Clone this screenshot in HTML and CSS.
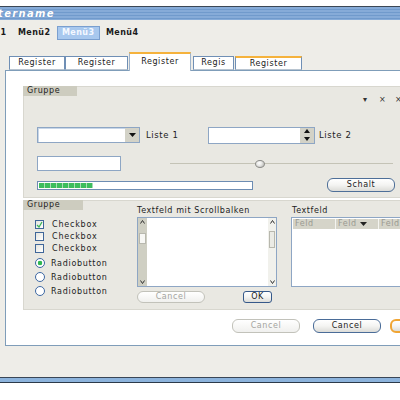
FILE: index.html
```html
<!DOCTYPE html>
<html>
<head>
<meta charset="utf-8">
<link rel="stylesheet" href="styles.css">
</head>
<body>
<div class="window">
  <div class="titlebar"><span class="title">Fenstername</span></div>
  <div class="menubar">
    <span class="menu">Menü1</span><span class="menu">Menü2</span><span class="menu active">Menü3</span><span class="menu">Menü4</span>
  </div>
  <div class="tabs">
    <div class="tab t1">Register</div>
    <div class="tab t2">Register</div>
    <div class="tab t3 selected">Register</div>
    <div class="tab t4">Regis</div>
    <div class="tab t5 hover">Register</div>
  </div>
  <div class="panel">
    <div class="group g1">
      <div class="legend">Gruppe</div>
      <div class="win-icons"><span>▾</span><span>×</span><span>×</span></div>
      <div class="row r1">
        <div class="combo">
          <div class="drop"><svg width="7" height="4" viewBox="0 0 7 4"><polygon points="0,0 7,0 3.5,4" fill="#111"/></svg></div>
        </div>
        <span class="lbl l1">Liste 1</span>
        <div class="spinner">
          <div class="spin">
            <span><svg width="6" height="4" viewBox="0 0 6 4"><polygon points="0,4 6,4 3,0" fill="#111"/></svg></span>
            <span><svg width="6" height="4" viewBox="0 0 6 4"><polygon points="0,0 6,0 3,4" fill="#111"/></svg></span>
          </div>
        </div>
        <span class="lbl l2">Liste 2</span>
      </div>
      <div class="row r2">
        <div class="textfield"></div>
        <div class="slider"><div class="knob"></div></div>
      </div>
      <div class="row r3">
        <div class="progress"><div class="bar"></div></div>
        <div class="btn schalt">Schalt</div>
      </div>
    </div>

    <div class="group g2">
      <div class="col c1">
        <div class="legend wide">Gruppe</div>
        <div class="checks">
          <div class="opt chk"><span class="cb"><svg width="7" height="7" viewBox="0 0 7 7"><polyline points="1,4 3,6 6,1" fill="none" stroke="#3cb45a" stroke-width="1.3"/></svg></span>Checkbox</div>
          <div class="opt chk"><span class="cb"></span>Checkbox</div>
          <div class="opt chk"><span class="cb"></span>Checkbox</div>
        </div>
        <div class="radios">
          <div class="opt rad"><span class="rb on"></span>Radiobutton</div>
          <div class="opt rad"><span class="rb"></span>Radiobutton</div>
          <div class="opt rad"><span class="rb"></span>Radiobutton</div>
        </div>
      </div>
      <div class="col c2">
        <div class="caption">Textfeld mit Scrollbalken</div>
        <div class="textarea">
          <div class="sb left">
            <span class="arr"><svg width="5" height="4" viewBox="0 0 5 4"><polyline points="0.5,3.5 2.5,0.5 4.5,3.5" fill="none" stroke="#333" stroke-width="1"/></svg></span>
            <span class="thumb"></span>
            <span class="arr bottom"><svg width="5" height="4" viewBox="0 0 5 4"><polyline points="0.5,0.5 2.5,3.5 4.5,0.5" fill="none" stroke="#333" stroke-width="1"/></svg></span>
          </div>
          <div class="sb right">
            <span class="arr"><svg width="5" height="4" viewBox="0 0 5 4"><polyline points="0.5,3.5 2.5,0.5 4.5,3.5" fill="none" stroke="#333" stroke-width="1"/></svg></span>
            <span class="thumb"></span>
            <span class="arr bottom"><svg width="5" height="4" viewBox="0 0 5 4"><polyline points="0.5,0.5 2.5,3.5 4.5,0.5" fill="none" stroke="#333" stroke-width="1"/></svg></span>
          </div>
        </div>
        <div class="btnrow">
          <div class="btn disabled small">Cancel</div>
          <div class="btn ok">OK</div>
        </div>
      </div>
      <div class="col c3">
        <div class="caption">Textfeld</div>
        <div class="table">
          <div class="thead">
            <span class="th">Feld</span>
            <span class="th">Feld <svg width="7" height="4" viewBox="0 0 7 4"><polygon points="0,0 7,0 3.5,4" fill="#222"/></svg></span>
            <span class="th">Feld</span>
          </div>
        </div>
      </div>
    </div>

    <div class="actions">
      <div class="btn disabled big">Cancel</div>
      <div class="btn big cancel">Cancel</div>
      <div class="btn big default">OK</div>
    </div>
  </div>
  <div class="statusgap"></div>
  <div class="bottombar"></div>
</div>
</body>
</html>
```

FILE: styles.css
```css
* { box-sizing: border-box; }
html, body { margin: 0; padding: 0; }
body {
  width: 400px;
  height: 400px;
  overflow: hidden;
  background: #ffffff;
  font-family: "DejaVu Sans", "Liberation Sans", sans-serif;
  font-size: 8px;
  letter-spacing: 0.6px;
  color: #222;
}
.window {
  margin-top: 6px;
  width: 440px;
  background: #eeede8;
}
.titlebar {
  height: 14px;
  border-top: 1px solid #3b4756;
  background: repeating-linear-gradient(to bottom, #86abd8 0, #86abd8 2px, #709acc 2px, #709acc 3px);
  overflow: hidden;
  white-space: nowrap;
}
.title {
  display: block;
  margin-left: -33px;
  font: italic bold 10px/13px "DejaVu Sans", sans-serif;
  letter-spacing: 1.3px;
  color: #fff;
  text-shadow: 0 0 1px #5f86b8;
}
.menubar {
  display: flex;
  height: 32px;
  padding-top: 6px;
  margin-left: -31px;
  white-space: nowrap;
}
.menu {
  width: 44px;
  height: 14px;
  padding-left: 5px;
  line-height: 14px;
  font-weight: bold;
  letter-spacing: 0.4px;
  color: #1a1a1a;
  flex: none;
}
.menu.active {
  width: 43px;
  margin-right: 1px;
  padding-left: 4px;
  line-height: 12px;
  background: #a8c8ee;
  border: 1px solid #7a9fcf;
  color: #f4f8ff;
}
.tabs {
  display: flex;
  align-items: flex-end;
  height: 18px;
  padding-left: 9px;
}
.tab {
  flex: none;
  height: 14px;
  line-height: 12px;
  text-align: center;
  background: #fff;
  border: 1px solid #6f8fb5;
  border-bottom: 1px solid #b8c4d0;
  color: #222;
}
.t1 { width: 56px; }
.t2 { width: 63px; margin-right: 1px; }
.t3 { width: 62px; margin-right: 2px; }
.t4 { width: 41px; margin-right: 1px; }
.t5 { width: 67px; }
.tab.selected {
  position: relative;
  z-index: 1;
  height: 19px;
  margin-bottom: -1px;
  line-height: 15px;
  border: 1px solid #9fb4cc;
  border-top: 2px solid #f5b23c;
  border-bottom: none;
}
.tab.hover {
  border-top: 2px solid #f5b23c;
  line-height: 11px;
}
.panel {
  margin-left: 5px;
  width: 430px;
  height: 276px;
  background: #fff;
  border: 1px solid #7f9db9;
  padding: 15px 0 0 17px;
}
.group {
  width: 400px;
  background: #e9e8e2;
  border: 1px solid #d8d7cf;
}
.g1 { height: 112px; }
.g2 { height: 110px; margin-top: 2px; display: flex; }
.legend {
  width: 54px;
  height: 10px;
  margin: -1px 0 0 -1px;
  padding-left: 4px;
  line-height: 10px;
  background: #cdccbf;
  color: #222;
}
.legend.wide { width: 60px; }
.win-icons {
  display: flex;
  height: 8px;
  line-height: 8px;
  padding-left: 339px;
  color: #333;
}
.win-icons span { width: 16px; flex: none; }
.row {
  display: flex;
  align-items: center;
  padding-left: 13px;
}
.r1 { margin-top: 23px; height: 16px; }
.combo {
  width: 103px;
  height: 16px;
  background: #fff;
  border: 1px solid #8ea6c4;
  box-shadow: inset 1px 1px 0 #c8d6e8;
  display: flex;
  justify-content: flex-end;
  flex: none;
}
.drop {
  width: 14px;
  height: 100%;
  background: #d3d2c7;
  display: flex;
  align-items: center;
  justify-content: center;
}
.drop svg { display: block; }
.lbl { flex: none; font-size: 8.5px; }
.l1 { width: 68px; padding-left: 6px; }
.spinner {
  width: 107px;
  height: 17px;
  background: #fff;
  border: 1px solid #8ea6c4;
  display: flex;
  justify-content: flex-end;
  flex: none;
}
.spin {
  width: 14px;
  height: 100%;
  background: #d3d2c7;
  display: flex;
  flex-direction: column;
}
.spin span {
  flex: 1;
  display: flex;
  align-items: center;
  justify-content: center;
}
.spin svg { display: block; }
.l2 { padding-left: 4px; }
.r2 { margin-top: 13px; height: 15px; }
.textfield {
  width: 84px;
  height: 15px;
  background: #fff;
  border: 1px solid #8ea6c4;
  flex: none;
}
.slider {
  margin-left: 49px;
  width: 223px;
  height: 9px;
  flex: none;
  display: flex;
  align-items: center;
  background: linear-gradient(to bottom, transparent 4px, #c4c3b6 4px, #c4c3b6 5px, transparent 5px);
}
.knob {
  margin-left: 85px;
  width: 10px;
  height: 8px;
  border-radius: 50%;
  border: 1px solid #8c8c88;
  background: radial-gradient(circle at 40% 35%, #ffffff 0, #e8e8e6 40%, #a8a8a4 100%);
}
.r3 { margin-top: 7px; height: 14px; }
.progress {
  width: 216px;
  height: 9px;
  flex: none;
  background: #fff;
  border: 1px solid #6d8cb2;
  padding: 1px;
}
.bar {
  width: 54px;
  height: 100%;
  background: repeating-linear-gradient(to right, #3dbd5e 0, #3dbd5e 5px, #a8dcb4 5px, #a8dcb4 6px);
}
.btn {
  flex: none;
  text-align: center;
  border-radius: 6px;
  background: linear-gradient(to bottom, #ffffff 0, #f4f4f2 50%, #dcdcd8 100%);
  border: 1px solid #4e6f98;
  color: #222;
}
.schalt {
  margin-left: 74px;
  width: 68px;
  height: 14px;
  line-height: 12px;
}
.col { flex: none; }
.c1 { width: 113px; }
.checks { margin-top: 8px; }
.opt {
  display: flex;
  align-items: center;
  padding-left: 11px;
  color: #222;
}
.chk { height: 12px; letter-spacing: 0.8px; }
.cb {
  width: 9px;
  height: 9px;
  margin-right: 8px;
  border: 1px solid #3f6699;
  background: linear-gradient(to bottom right, #e4e4de, #ffffff);
  display: flex;
  align-items: center;
  justify-content: center;
  flex: none;
}
.cb svg { display: block; }
.radios { margin-top: 2px; }
.rad { height: 14px; letter-spacing: 0.7px; }
.rb {
  width: 10px;
  height: 10px;
  margin-right: 6px;
  border: 1px solid #3d68a3;
  border-radius: 50%;
  background: #fff;
  flex: none;
}
.rb.on {
  background: radial-gradient(circle, #2fb653 0, #2fb653 2px, #ffffff 2.6px);
}
.c2 { width: 140px; }
.caption {
  margin-top: 5px;
  height: 11px;
  line-height: 10px;
  white-space: nowrap;
}
.textarea {
  height: 70px;
  background: #fff;
  border: 1px solid #8ea6c4;
  display: flex;
  justify-content: space-between;
}
.sb {
  width: 9px;
  height: 100%;
  display: flex;
  flex-direction: column;
  align-items: center;
  flex: none;
}
.sb.left { background: #cfcfc3; }
.sb.right { background: #f1f1ec; width: 8px; }
.arr {
  height: 8px;
  display: flex;
  align-items: center;
  justify-content: center;
}
.arr svg { display: block; }
.arr.bottom { margin-top: auto; }
.thumb {
  width: 7px;
  background: #f7f7f4;
  border: 1px solid #b8b8ae;
}
.sb.left .thumb { margin-top: 7px; height: 11px; }
.sb.right .thumb { margin-top: 5px; height: 17px; width: 6px; background: #ebebe5; }
.btnrow {
  display: flex;
  margin-top: 4px;
  height: 12px;
}
.btn.disabled {
  border: 1px solid #c2c2ba;
  color: #a4a4a0;
  background: linear-gradient(to bottom, #ffffff, #f0f0ee);
}
.btn.small { width: 68px; height: 12px; line-height: 10px; }
.ok {
  margin-left: 38px;
  width: 29px;
  height: 12px;
  line-height: 10px;
  border-radius: 3px;
  border: 1px solid #36598a;
}
.c3 { width: 130px; margin-left: 14px; }
.c3 .caption { padding-left: 1px; }
.table {
  height: 70px;
  background: #fff;
  border: 1px solid #8ea6c4;
  padding: 1px 0 0 1px;
}
.thead {
  display: flex;
  height: 10px;
  background: #d5d4c9;
}
.th {
  width: 43px;
  flex: none;
  padding-left: 2px;
  line-height: 10px;
  color: #9a9a92;
  border-right: 1px solid #f4f4f0;
  display: flex;
  align-items: center;
  gap: 3px;
}
.th svg { display: block; }
.actions {
  display: flex;
  margin-top: 9px;
  margin-left: 209px;
  height: 14px;
}
.btn.big { width: 68px; height: 14px; line-height: 12px; }
.cancel { margin-left: 13px; border-color: #4a6c98; }
.default {
  margin-left: 9px;
  width: 60px;
  border: 2px solid #f0a534;
  line-height: 10px;
}
.statusgap { height: 31px; }
.bottombar {
  height: 6px;
  border-top: 1px solid #3a4656;
  border-bottom: 1px solid #2c3a4a;
  background: #8cb3dc;
}
```
